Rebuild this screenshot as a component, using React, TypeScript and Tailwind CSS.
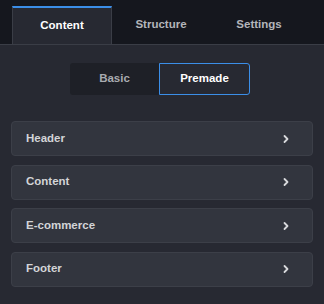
import React from "react";

const tabs = ["Content", "Structure", "Settings"];
const sections = ["Header", "Content", "E-commerce", "Footer"];

function Chevron() {
  return (
    <svg width="8" height="10" viewBox="0 0 8 10" fill="none">
      <path d="M2.5 2 L5.5 5 L2.5 8" stroke="#d8d9dc" strokeWidth="1.8" strokeLinecap="round" strokeLinejoin="round" />
    </svg>
  );
}

export default function App() {
  return (
    <div className="w-[324px] h-[304px] bg-[#272932] font-['Liberation_Sans',Arial,sans-serif] overflow-hidden">
      {/* top tabs */}
      <div className="flex pl-3 pr-4 pt-[6px] bg-[#15171e] border-b border-[#3a3d46]">
        {tabs.map((t, i) => (
          <div
            key={t}
            className={
              i === 0
                ? "flex-1 h-[38px] -mb-px flex items-center justify-center bg-[#272932] border-t-2 border-t-[#3b8ee8] border-x border-x-[#3a3d46] text-[11.5px] font-bold text-white"
                : "flex-1 h-[38px] flex items-center justify-center text-[11.5px] font-bold text-[#b3b5ba]"
            }
          >
            {t}
          </div>
        ))}
      </div>

      {/* basic / premade switch */}
      <div className="mt-[18px] flex pl-[70px]">
        <div className="flex w-[180px] h-8">
          <div className="flex-1 flex items-center justify-center bg-[#1e2027] rounded-l-[3px] text-[11.5px] font-bold text-[#a9abb0]">
            Basic
          </div>
          <div className="flex-1 flex items-center justify-center border border-[#3b8ee8] rounded-r-[3px] text-[11.5px] font-bold text-white">
            Premade
          </div>
        </div>
      </div>

      {/* sections */}
      <div className="mt-[26px] px-[11px] flex flex-col gap-[8.5px]">
        {sections.map((s) => (
          <div
            key={s}
            className="h-[35px] flex items-center justify-between pl-[14px] pr-[22px] bg-[#32353e] border border-[#3c3f48] rounded-[4px] text-[11.5px] font-bold text-[#d3d4d7]"
          >
            <span>{s}</span>
            <Chevron />
          </div>
        ))}
      </div>
    </div>
  );
}
